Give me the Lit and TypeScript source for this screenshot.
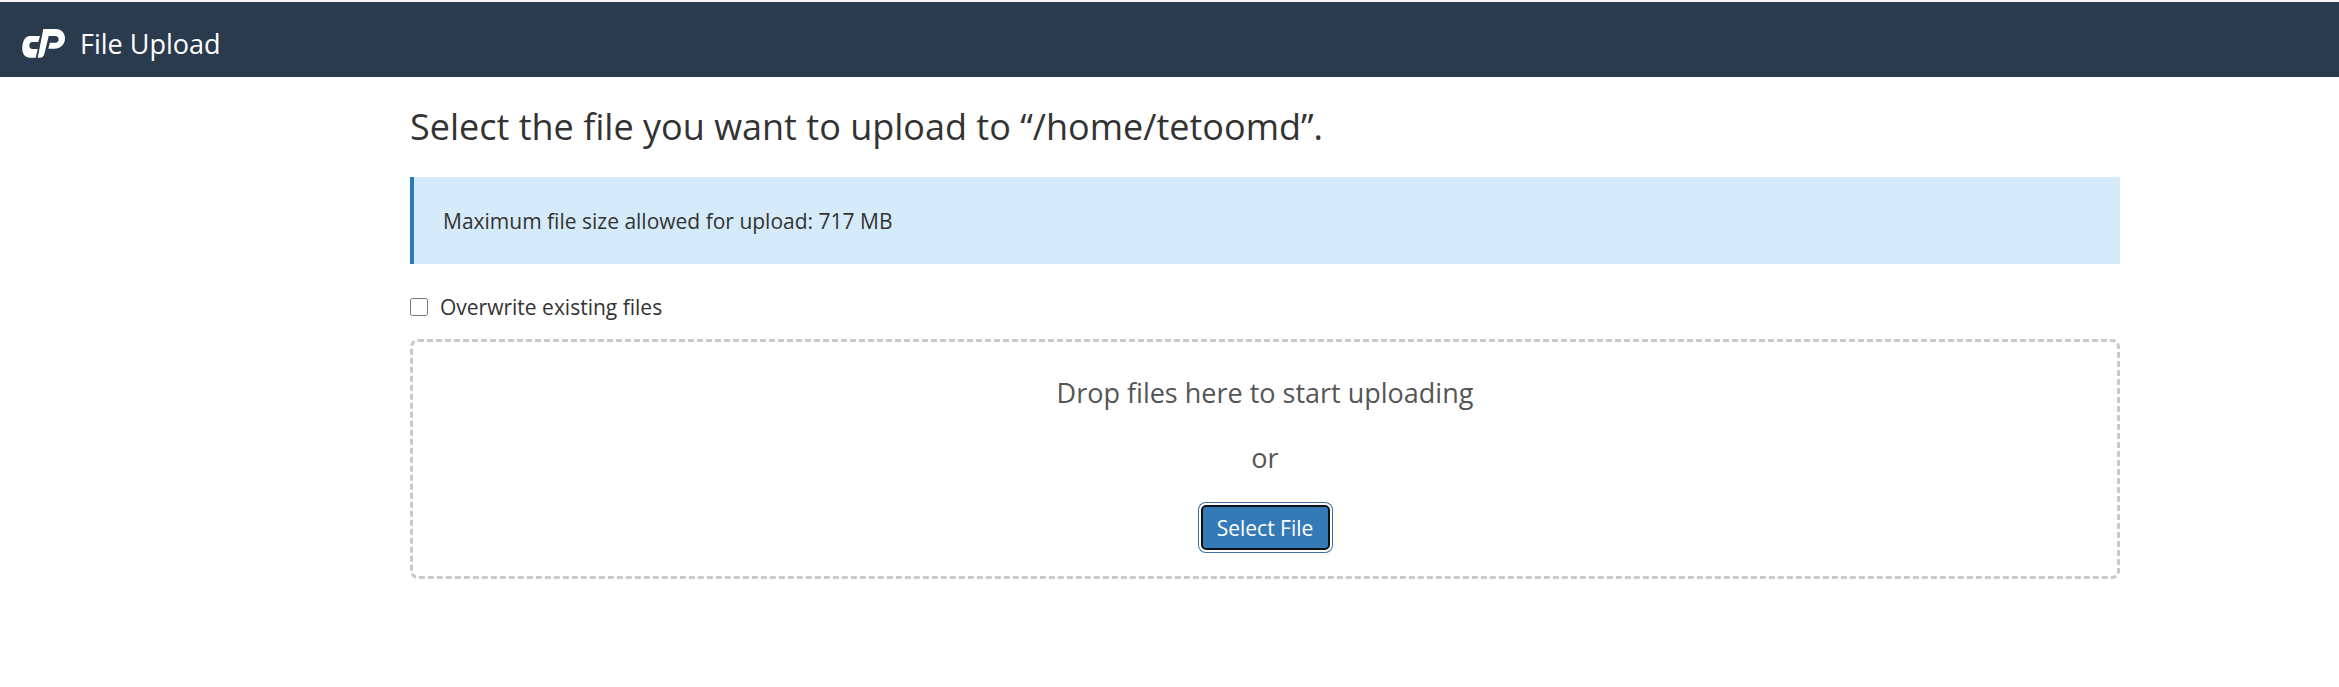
import { LitElement, html, css } from 'lit';
import { customElement } from 'lit/decorators.js';

@customElement('app-root')
export class AppRoot extends LitElement {
    static styles = css`
        :host {
            display: block;
            min-height: 687px;
            background: #fff;
            font-family: "Open Sans", sans-serif;
            color: #333;
        }
        .strip { height: 2px; background: #f5f5f5; }
        .topbar {
            height: 75px;
            box-sizing: border-box;
            padding: 7px 0 0 21px;
            background: #2a3b4d;
            display: flex;
            align-items: center;
            gap: 15px;
            color: #fff;
            font-size: 27px;
        }
        .topbar svg { display: block; }
        .main {
            width: 1710px;
            margin-left: 410px;
        }
        h1 {
            margin: 0;
            padding-top: 25px;
            font-size: 36px;
            line-height: 50px;
            font-weight: 400;
            color: #333;
        }
        .alert {
            margin-top: 25px;
            height: 87px;
            box-sizing: border-box;
            background: #d6ebf9;
            border-left: 4px solid #2a7ab8;
            padding-left: 29px;
            display: flex;
            align-items: center;
            font-size: 21px;
        }
        .check {
            margin-top: 28px;
            display: flex;
            align-items: center;
            gap: 12px;
            height: 30px;
            font-size: 21px;
        }
        .check input {
            width: 18px;
            height: 18px;
            margin: 0;
        }
        .drop {
            margin-top: 17px;
            height: 240px;
            box-sizing: border-box;
            border: 3px dashed #c9c9c9;
            border-radius: 8px;
            display: flex;
            flex-direction: column;
            align-items: center;
            color: #555;
            font-size: 27px;
        }
        .drop p { margin: 0; line-height: 36px; }
        .drop .first { margin-top: 33px; }
        .drop .or { margin-top: 29px; }
        .btn {
            margin-top: 29px;
            box-sizing: border-box;
            width: 129px;
            height: 45px;
            padding: 0;
            background: #337ab7;
            color: #fff;
            font: 400 21px "Open Sans", sans-serif;
            border: 2px solid #111;
            border-radius: 5px;
            outline: 2px solid #fff;
            box-shadow: 0 0 0 3px #3d6fa5;
        }
    `;

    render() {
        return html`
            <div class="strip"></div>
            <header class="topbar">
                <svg width="44" height="29" viewBox="0 0 44 29" fill="#fff">
                    <path d="M9 7h10l-1.700 6h-6c-1.900 0-3 1.800-3 3.500 0 1.800 1.200 3.500 3 3.500H16.700l-2 8.700H9C3.500 28.700.8 24 1.300 18 1.800 11.500 4.500 7 9 7z"/>
                    <path d="M22.300 0H35c5.500 0 9 4.300 9 9.500 0 5.700-4.500 10.200-10.700 10.200h-6l1.600-6h5.400c2 0 3.400-1.700 3.400-3.300 0-1.800-1.300-3.400-3.400-3.400h-6.600l-4.300 17.700c-.6 2.500-2.200 4-4.700 4h-2z"/>
                </svg>
                <span>File Upload</span>
            </header>
            <main class="main">
                <h1>Select the file you want to upload to “/home/tetoomd”.</h1>
                <div class="alert">Maximum file size allowed for upload: 717 MB</div>
                <label class="check"><input type="checkbox" /><span>Overwrite existing files</span></label>
                <section class="drop">
                    <p class="first">Drop files here to start uploading</p>
                    <p class="or">or</p>
                    <button class="btn">Select File</button>
                </section>
            </main>
        `;
    }
}
